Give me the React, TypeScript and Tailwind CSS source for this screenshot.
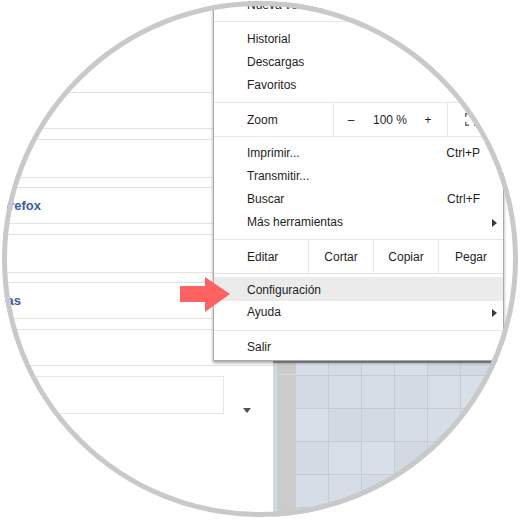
import React from 'react';

const line = 'border-[#e4e4e4]';

function SettingsPage() {
  return (
    <div className="flex w-[273px] shrink-0 flex-col bg-white pt-[92px]">
      <div className={`h-[37px] border-y ${line}`} />
      <div className={`mt-[10px] h-[39px] border-y ${line}`} />
      <div className={`mt-[9px] flex h-[37px] items-center border-y ${line}`}>
        <div className="flex w-[41px] justify-end whitespace-nowrap text-[13px] font-bold text-[#385ea5]">
          Mozilla Firefox
        </div>
      </div>
      <div className={`mt-[10px] h-[39px] border-y ${line}`} />
      <div className={`mt-[9px] flex h-[37px] items-center border-y ${line}`}>
        <div className="flex w-[21px] justify-end whitespace-nowrap text-[13px] font-bold text-[#385ea5]">
          Contraseñas
        </div>
      </div>
      <div className={`mt-[10px] h-[37px] border-y ${line}`} />
      <div className="mt-[10px] flex items-end">
        <div className="h-[38px] w-[224px] border border-[#e6e6e6]" />
        <div className="mb-[1px] ml-[19px] h-0 w-0 border-x-[4px] border-t-[5px] border-x-transparent border-t-[#505050]" />
      </div>
    </div>
  );
}

const tileShade = [
  'bg-[#d6dde7]', 'bg-[#d3dae4]', 'bg-[#d8dfe9]', 'bg-[#d4dbe5]', 'bg-[#d6dde7]', 'bg-[#d2d9e3]', 'bg-[#d7dee8]',
];

function TileWindow() {
  const cells = Array.from({ length: 42 });
  return (
    <div className="flex flex-1 border-t-2 border-[#9a9a9a]">
      <div className="w-[4px] bg-[#cfd8e3]" />
      <div className="flex w-[18px] flex-col bg-[#cbcbcb]">
        <div className="h-[12px] border-b border-[#d8d8d8]" />
      </div>
      <div className="flex-1 bg-[#c8cbd0] pl-px">
        <div className="grid grid-cols-[repeat(7,32px)] grid-rows-[12px_repeat(5,32px)] gap-px">
          {cells.map((_, i) => (
            <div key={i} className={tileShade[(i * 3 + Math.floor(i / 7)) % 7]} />
          ))}
        </div>
      </div>
    </div>
  );
}

function RightPane() {
  return (
    <div className="flex flex-1 flex-col bg-white">
      <div className="h-[361px] shrink-0" />
      <TileWindow />
    </div>
  );
}

function Sep({ className = '' }: { className?: string }) {
  return <div className={`h-px bg-[#e6e6e6] ${className}`} />;
}

function Item({
  label,
  shortcut,
  sub,
  className = '',
}: {
  label: string;
  shortcut?: string;
  sub?: boolean;
  className?: string;
}) {
  return (
    <div className={`flex h-[23px] items-center whitespace-nowrap pl-[33px] pr-[23px] leading-[23px] ${className}`}>
      <span>{label}</span>
      {shortcut && <span className="ml-auto">{shortcut}</span>}
      {sub && (
        <span className="-mr-[17px] ml-auto h-0 w-0 border-y-[4px] border-l-[5px] border-y-transparent border-l-[#3c3c3c]" />
      )}
    </div>
  );
}

function FullscreenIcon() {
  return (
    <svg width="13" height="13" viewBox="0 0 13 13" fill="none" stroke="#6a6a6a" strokeWidth="1.4">
      <path d="M0.7 4V0.7H4M9 0.7H12.3V4M12.3 9V12.3H9M4 12.3H0.7V9" />
    </svg>
  );
}

function ChromeMenu() {
  return (
    <div className="absolute left-[213px] top-[-6px] w-[291px] border-x border-b border-[#a9a9a9] bg-white pb-px text-[12px] text-[#1e1e1e] shadow-[0_2px_3px_rgba(0,0,0,0.35)]">
      <Item label="Nueva ventana de incógnito" shortcut="Ctrl+Mayús+N" />
      <Sep className="mt-[4px]" />
      <div className="mt-[6px]" />
      <Item label="Historial" shortcut="" />
      <Item label="Descargas" />
      <Item label="Favoritos" />
      <Sep className="mt-[5px]" />
      <div className="flex h-[33px] items-center">
        <div className="flex h-full w-[119px] items-center pl-[33px]">Zoom</div>
        <div className="h-full w-px bg-[#e6e6e6]" />
        <div className="flex h-full w-[113px] items-center">
          <span className="w-[34px] text-center">–</span>
          <span className="w-[44px] text-center">100 %</span>
          <span className="w-[32px] text-center">+</span>
        </div>
        <div className="h-full w-px bg-[#e6e6e6]" />
        <div className="flex h-full flex-1 items-center pl-[17px]">
          <FullscreenIcon />
        </div>
      </div>
      <Sep />
      <div className="mt-[5px]" />
      <Item label="Imprimir..." shortcut="Ctrl+P" />
      <Item label="Transmitir..." />
      <Item label="Buscar" shortcut="Ctrl+F" />
      <Item label="Más herramientas" sub />
      <Sep className="mt-[5px]" />
      <div className="flex h-[33px] items-center">
        <div className="flex h-full w-[94px] items-center pl-[33px]">Editar</div>
        <div className="h-full w-px bg-[#e6e6e6]" />
        <div className="flex h-full w-[64px] items-center justify-center">Cortar</div>
        <div className="h-full w-px bg-[#e6e6e6]" />
        <div className="flex h-full w-[64px] items-center justify-center">Copiar</div>
        <div className="h-full w-px bg-[#e6e6e6]" />
        <div className="flex h-full flex-1 items-center justify-center">Pegar</div>
      </div>
      <Sep />
      <div className="mt-[3px] flex h-[24px] items-start bg-[#ebebeb] pl-[33px] pt-[2px] leading-[22px]">
        Configuración
      </div>
      <Item label="Ayuda" sub />
      <Sep className="mt-[6px]" />
      <div className="mt-[5px]" />
      <Item label="Salir" />
    </div>
  );
}

function PointerArrow() {
  return (
    <svg className="absolute left-[180px] top-[277px]" width="51" height="36" viewBox="0 0 51 36">
      <polygon points="0,9 25,9 25,0 50,17 25,35 25,25 0,25" fill="#ff6262" />
    </svg>
  );
}

export default function App() {
  return (
    <div className="relative h-[520px] w-[520px] overflow-hidden bg-white font-['Liberation_Sans',Arial,sans-serif]">
      <div className="absolute left-[2px] top-[1px] h-[516px] w-[516px] overflow-hidden rounded-full">
        <div className="relative -ml-[2px] -mt-[1px] flex h-[520px] w-[520px]">
          <SettingsPage />
          <RightPane />
          <ChromeMenu />
          <PointerArrow />
        </div>
      </div>
      <div className="pointer-events-none absolute left-[2px] top-[1px] h-[516px] w-[516px] rounded-full border-[5px] border-[#c9c9c9]" />
    </div>
  );
}
